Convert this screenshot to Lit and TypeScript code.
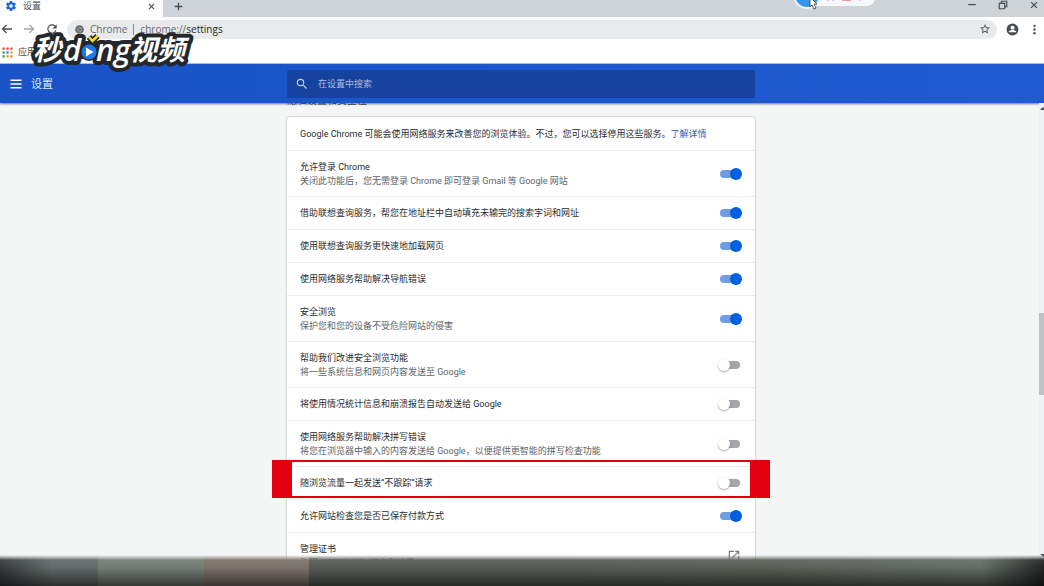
import { LitElement, html, css, svg, nothing } from "lit";
import { customElement, property, state } from "lit/decorators.js";
import { classMap } from "lit/directives/class-map.js";

interface Setting {
  id: string;
  title: string;
  note?: string;
  on?: boolean;
  marked?: boolean;
  external?: boolean;
}

const SETTINGS: Setting[] = [
  { id: "signin", title: "允许登录 Chrome", note: "关闭此功能后，您无需登录 Chrome 即可登录 Gmail 等 Google 网站", on: true },
  { id: "suggest", title: "借助联想查询服务，帮您在地址栏中自动填充未输完的搜索字词和网址", on: true },
  { id: "preload", title: "使用联想查询服务更快速地加载网页", on: true },
  { id: "naverror", title: "使用网络服务帮助解决导航错误", on: true },
  { id: "safe", title: "安全浏览", note: "保护您和您的设备不受危险网站的侵害", on: true },
  { id: "improve", title: "帮助我们改进安全浏览功能", note: "将一些系统信息和网页内容发送至 Google" },
  { id: "reports", title: "将使用情况统计信息和崩溃报告自动发送给 Google" },
  { id: "spelling", title: "使用网络服务帮助解决拼写错误", note: "将您在浏览器中输入的内容发送给 Google，以便提供更智能的拼写检查功能" },
  { id: "dnt", title: "随浏览流量一起发送“不跟踪”请求", marked: true },
  { id: "payment", title: "允许网站检查您是否已保存付款方式", on: true },
  { id: "certs", title: "管理证书", note: "管理 HTTPS/SSL 证书和设置", external: true },
];

const icon = (size: number, body: unknown) =>
  html`<svg width=${size} height=${size} viewBox="0 0 24 24" fill="currentColor" aria-hidden="true">${body}</svg>`;

const gear = svg`<path fill-rule="evenodd" d="M19.4 13a7.500 7.500 0 0 0 0-2l2.200-1.700a.5.5 0 0 0 .1-.6l-2-3.500a.5.5 0 0 0-.6-.2l-2.500 1a7 7 0 0 0-1.700-1l-.4-2.600a.5.5 0 0 0-.5-.4h-4a.5.5 0 0 0-.5.400L9.100 5a7 7 0 0 0-1.700 1l-2.500-1a.5.5 0 0 0-.6.200l-2 3.500a.5.5 0 0 0 .1.600L4.600 11a7.500 7.500 0 0 0 0 2l-2.200 1.700a.5.5 0 0 0-.1.600l2 3.500c.1.200.4.300.6.200l2.500-1a7 7 0 0 0 1.700 1l.4 2.600c0 .2.200.4.500.4h4c.2 0 .5-.2.500-.4l.4-2.600a7 7 0 0 0 1.700-1l2.500 1c.2.100.5 0 .6-.2l2-3.500a.5.5 0 0 0-.1-.6zM12 15.500a3.500 3.500 0 1 1 0-7 3.500 3.500 0 0 1 0 7z"/>`;
const close = svg`<path d="M5 5l14 14M19 5L5 19" stroke="currentColor" stroke-width="3" fill="none"/>`;
const plus = svg`<path d="M12 2v20M2 12h20" stroke="currentColor" stroke-width="3.500" fill="none"/>`;
const minimise = svg`<path d="M3 11h18" stroke="currentColor" stroke-width="3" fill="none"/>`;
const restore = svg`<path d="M3 8h13v13H3zM8 8V3h13v13h-5" stroke="currentColor" stroke-width="2.800" fill="none"/>`;
const back = svg`<path d="M22 12H3M11 4l-8 8 8 8" stroke="currentColor" stroke-width="2.600" fill="none"/>`;
const forward = svg`<path d="M2 12h19M13 4l8 8-8 8" stroke="currentColor" stroke-width="2.600" fill="none"/>`;
const reload = svg`<path d="M17.650 6.350A8 8 0 1 0 19.730 14h-2.080A6 6 0 1 1 12 6c1.660 0 3.140.690 4.220 1.780L13 11h7V4z"/>`;
const chromeMark = svg`<circle cx="12" cy="12" r="11.500"/><circle cx="12" cy="12" r="5" fill="none" stroke="#c4c6c9" stroke-width="1.500"/><path d="M12 7h10M7.700 14.500l-5-8.600M16.300 14.500l-5 8.600" stroke="#a5a7aa" stroke-width="1"/>`;
const star = svg`<path d="M22 9.240l-7.190-.620L12 2 9.190 8.630 2 9.240l5.460 4.730L5.820 21 12 17.270 18.180 21l-1.630-7.030zM12 15.400l-3.760 2.270 1-4.280-3.320-2.880 4.380-.380L12 6.100l1.710 4.040 4.380.380-3.320 2.880 1 4.280z"/>`;
const account = svg`<path fill-rule="evenodd" d="M12 1a11 11 0 1 0 0 22 11 11 0 0 0 0-22zm0 4a3.800 3.800 0 1 1 0 7.600A3.800 3.800 0 0 1 12 5zm-7 11c0-2.300 4.700-3.200 7-3.200s7 .9 7 3.200v1H5z"/>`;
const dots = svg`<circle cx="12" cy="4" r="2.600"/><circle cx="12" cy="12" r="2.600"/><circle cx="12" cy="20" r="2.600"/>`;
const menu = svg`<path d="M1 3h22v3H1zM1 10.500h22v3H1zM1 18h22v3H1z"/>`;
const search = svg`<path d="M15.500 14h-.79l-.28-.27A6.471 6.471 0 0 0 16 9.500 6.500 6.500 0 1 0 9.500 16c1.610 0 3.090-.59 4.230-1.570l.27.28v.79l5 4.990L20.490 19zm-6 0a4.500 4.500 0 1 1 0-9 4.500 4.500 0 0 1 0 9z"/>`;
const openOut = svg`<path d="M19 19H5V5h7V3H3v18h18v-9h-2zM14 3v2h3.590l-9.830 9.830 1.410 1.410L19 6.410V10h2V3z"/>`;
const apps = svg`
  <path fill="#e04a3f" d="M1 1h5v5H1zM9.500 1h5v5h-5zM18 1h5v5h-5z"/>
  <path fill="#35a05a" d="M1 9.500h5v5H1z"/><path fill="#3b78e0" d="M9.500 9.500h5v5h-5z"/><path fill="#eea52c" d="M18 9.500h5v5h-5z"/>
  <path fill="#35a05a" d="M1 18h5v5H1z"/><path fill="#e7932b" d="M9.500 18h5v5h-5zM18 18h5v5h-5z"/>`;

const base = css`
  * { box-sizing: border-box; }
  svg { display: block; flex: none; }
  button { display: grid; place-items: center; padding: 0; border: 0; background: none; color: inherit; font: inherit; }
`;

@customElement("browser-chrome")
class BrowserChrome extends LitElement {
  static styles = [base, css`
    :host { display: block; color: #4a4d52; font-size: 9px; }
    .tabs { display: flex; height: 17px; background: #cfd3da; }
    .tab { display: flex; align-items: center; gap: 6px; width: 163px; padding: 0 7px 5px 5px; background: #fff; }
    .tab span { flex: 1; }
    .gear { color: #1a66d8; }
    .new-tab { width: 30px; padding-bottom: 5px; }
    .window { display: flex; gap: 21px; margin-left: auto; padding: 0 5px 8px 0; }
    .tools { display: flex; align-items: center; gap: 10px; height: 24px; padding: 0 4px 0 1px; background: #fff; }
    .dim { color: #a4a7ab; }
    .address { display: flex; flex: 1; align-items: center; gap: 6px; height: 19px; margin: 0 -1px 0 -2px; padding: 0 6px 0 8px; border-radius: 10px; background: #e9eaec; font: 10px/19px "Open Sans", "Noto Sans", sans-serif; color: #65686d; }
    .sep { width: 1px; height: 11px; background: #85888c; }
    .address b { font-weight: 400; color: #26282b; }
    .address button { margin-left: auto; color: #4a4d52; }
    .marks { display: flex; align-items: center; gap: 5px; height: 23px; padding: 0 2px; background: #fff; border-bottom: 1px solid #b9c2d4; }
  `];

  render() {
    return html`
      <div class="tabs">
        <div class="tab"><i class="gear">${icon(12, gear)}</i><span>设置</span>
          <button aria-label="关闭标签页">${icon(9, close)}</button></div>
        <button class="new-tab" aria-label="新标签页">${icon(9, plus)}</button>
        <div class="window">
          <button aria-label="最小化">${icon(10, minimise)}</button>
          <button aria-label="还原">${icon(10, restore)}</button>
          <button aria-label="关闭">${icon(10, close)}</button>
        </div>
      </div>
      <div class="tools">
        <button aria-label="后退">${icon(12, back)}</button>
        <button class="dim" aria-label="前进">${icon(12, forward)}</button>
        <button aria-label="重新加载">${icon(14, reload)}</button>
        <div class="address">
          ${icon(9, chromeMark)}<span>Chrome</span><span class="sep"></span><span>chrome://<b>settings</b></span>
          <button aria-label="收藏">${icon(12, star)}</button>
        </div>
        <button aria-label="用户">${icon(13, account)}</button>
        <button aria-label="更多">${icon(11, dots)}</button>
      </div>
      <div class="marks">${icon(11, apps)}<span>应用</span></div>
    `;
  }
}

@customElement("setting-row")
class SettingRow extends LitElement {
  @property({ attribute: false }) item!: Setting;

  static styles = [base, css`
    :host { display: block; }
    .row { position: relative; display: flex; align-items: center; justify-content: space-between; min-height: 33px; padding: 0 13px; border-top: 1px solid #ebecee; line-height: 14px; }
    .double { min-height: 46px; }
    .text { display: flex; flex-direction: column; color: #2a2c30; }
    .note { color: #606368; }
    .marked::after { content: ""; position: absolute; z-index: 1; inset: -7px -15px 1px; border: solid #e2000f; border-width: 2px 20px; pointer-events: none; }
    .switch { position: relative; flex: none; appearance: none; width: 24px; height: 12px; margin: 0; }
    .switch::before { content: ""; position: absolute; top: 2px; left: 2px; width: 20px; height: 8px; border-radius: 4px; background: #a6a6aa; }
    .switch::after { content: ""; position: absolute; top: 0; left: 0; width: 12px; height: 12px; border-radius: 50%; background: #fff; box-shadow: 0 1px 2px #0005; }
    .switch:checked::before { background: #6e9de3; }
    .switch:checked::after { left: 12px; background: #0060df; box-shadow: none; }
    .out { margin-right: 1px; color: #75787c; }
  `];

  render() {
    const s = this.item;
    return html`
      <div class=${classMap({ row: true, double: !!s.note, marked: !!s.marked })}>
        <label class="text" for=${s.id}><span>${s.title}</span>${s.note ? html`<span class="note">${s.note}</span>` : nothing}</label>
        ${s.external
          ? html`<button class="out" id=${s.id}>${icon(14, openOut)}</button>`
          : html`<input class="switch" type="checkbox" id=${s.id} ?checked=${!!s.on} />`}
      </div>
    `;
  }
}

@customElement("video-mark")
class VideoMark extends LitElement {
  static styles = [base, css`
    :host { display: block; }
    svg { overflow: visible; }
    text { fill: #fff; stroke: #24272b; stroke-width: 8px; stroke-linejoin: round; paint-order: stroke; }
    .han { font: italic 700 28px "Noto Sans CJK SC", sans-serif; }
    .latin { font: italic 600 31px "Open Sans", sans-serif; }
  `];

  render() {
    return html`
      <svg width="160" height="38" viewBox="0 0 160 38" role="img" aria-label="秒dong视频">
        <path d="M8 8H152L146 26H4z" fill="#24272b"/>
        <text class="latin" x="66" y="28">ng</text>
        <text class="latin" x="33" y="28">d</text>
        <text class="han" x="3" y="27">秒</text>
        <text class="han" x="99" y="27">视频</text>
        <circle cx="59" cy="19" r="9" fill="#24272b"/>
        <circle cx="59" cy="19" r="7.500" fill="#1d78ea"/>
        <path d="M56 14.500v9l7.500-4.500z" fill="#fff"/>
        <path d="M59 4l3.500 4 5-5" fill="none" stroke="#24272b" stroke-width="6" stroke-linejoin="round"/>
        <path d="M59 4l3.500 4 5-5" fill="none" stroke="#ffd91c" stroke-width="2.500"/>
      </svg>
    `;
  }
}

@customElement("app-root")
class AppRoot extends LitElement {
  @state() private settings = SETTINGS;

  static styles = [base, css`
    :host { position: relative; display: flex; flex-direction: column; height: 100vh; overflow: hidden; background: #f4f6f6; font: 9px/14px Roboto, "Noto Sans CJK SC", sans-serif; }
    .bar { display: grid; grid-template-columns: 1fr minmax(0, 468px) 1fr; align-items: center; flex: none; height: 39px; padding-right: 2px; background: linear-gradient(90deg, #1953c7, #205ad2); box-shadow: 0 1px 2px #0008; color: #fff; }
    .brand { display: flex; align-items: center; gap: 9px; padding-left: 10px; }
    .brand h1 { margin: 0; padding-top: 2px; color: #dfe8f8; font-size: 11px; font-weight: 400; }
    .search { display: flex; align-items: center; gap: 9px; height: 28px; padding: 0 8px; border-radius: 2px; background: #15439d; color: #c3d0ea; }
    .search input { flex: 1; min-width: 0; padding: 0; border: 0; outline: 0; background: none; color: inherit; font: inherit; }
    .search input::placeholder { color: #a9bce2; opacity: 1; }
    .page { display: flex; flex: 1; min-height: 0; }
    .content { flex: 1; padding-left: 3px; overflow: hidden; }
    .column { width: 100%; max-width: 468px; margin: 0 auto; }
    .heading { display: flex; align-items: flex-end; height: 3px; margin: 0 0 11px; overflow: hidden; color: #35383c; font-size: 10px; font-weight: 400; line-height: 10px; }
    .card { border-radius: 3px; background: #fff; box-shadow: 0 0 2px #0006; }
    .intro { margin: 0; padding: 10px 13px 9px; color: #2a2c30; }
    .intro a { color: #2a5cc4; text-decoration: none; }
    .scroll { display: flex; flex-direction: column; width: 5px; padding-top: 3px; background: #eff0f1; color: #505356; }
    .thumb { height: 82px; margin: 203px 0 159px; background: #bfc0c2; }
    .logo { position: absolute; top: 33px; left: 30px; z-index: 2; }
    .pill { position: absolute; top: 0; right: 168px; z-index: 2; width: 82px; height: 11px; overflow: visible; }
    .blur { position: absolute; inset: auto 0 0; z-index: 2; height: 31px; mask-image: linear-gradient(transparent, #000 5px);
      background:
        linear-gradient(#fff2, #0000 40%, #0008),
        linear-gradient(90deg, #1e2022aa, #0000 5%, #0000 94%, #111c),
        linear-gradient(90deg, #626968 98px, #747b75 98px 204px, #7b716a 204px 309px, #565a56 309px 50%, #5a5f57 75%, #67706a); }
  `];

  render() {
    return html`
      <browser-chrome></browser-chrome>
      <header class="bar">
        <div class="brand"><button aria-label="主菜单">${icon(12, menu)}</button><h1>设置</h1></div>
        <label class="search">${icon(14, search)}<input type="search" placeholder="在设置中搜索" aria-label="在设置中搜索" /></label>
      </header>
      <div class="page">
        <main class="content">
          <div class="column">
            <h2 class="heading">隐私设置和安全性</h2>
            <section class="card">
              <p class="intro">Google Chrome 可能会使用网络服务来改善您的浏览体验。不过，您可以选择停用这些服务。<a href="#more">了解详情</a></p>
              ${this.settings.map((s) => html`<setting-row .item=${s}></setting-row>`)}
            </section>
          </div>
        </main>
        <div class="scroll">
          <svg width="5" height="4" viewBox="0 0 5 4" fill="currentColor"><path d="M1 4l3-3 1 1v2z"/></svg>
          <div class="thumb"></div>
          <svg width="5" height="4" viewBox="0 0 5 4" fill="currentColor"><path d="M1 0h4v3z"/></svg>
        </div>
      </div>
      <video-mark class="logo"></video-mark>
      <svg class="pill" viewBox="0 0 82 11" aria-hidden="true">
        <path d="M10 0h71q-2 6-10 6H20z" fill="#f5f7fa"/>
        <circle cx="13" cy="-5" r="14" fill="#eef3f9"/><circle cx="13" cy="-5" r="12" fill="#3497ee"/>
        <path d="M48 0h9v1h-9z" fill="#f29a9a"/>
        <path d="M33 0h2M38 0h2M65 0h2" stroke="#aeb4bb"/>
        <path d="M16-3v10l2-2 2 4 2-1-2-4h3z" fill="#fff" stroke="#333" stroke-width=".8"/>
      </svg>
      <div class="blur"></div>
    `;
  }
}
